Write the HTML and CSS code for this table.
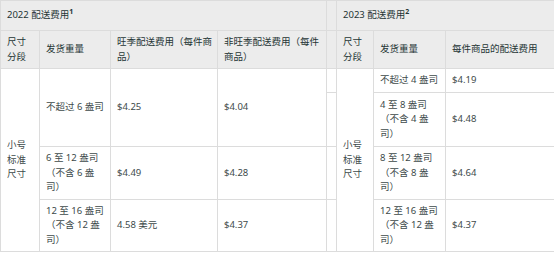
FILE: index.html
```html
<!DOCTYPE html>
<html lang="zh-CN">
<head>
<meta charset="utf-8">
<title>配送费用</title>
<link rel="stylesheet" href="styles.css">
</head>
<body>
<table class="fees">
  <colgroup>
    <col class="w39"><col class="w71"><col class="w107"><col class="w109">
    <col class="w10">
    <col class="w37"><col class="w72"><col class="w109">
  </colgroup>
  <thead>
    <tr class="r1">
      <th colspan="4">2022 配送费用<sup>1</sup></th>
      <th class="gap"></th>
      <th colspan="3">2023 配送费用<sup>2</sup></th>
    </tr>
    <tr class="r2">
      <th>尺寸分段</th>
      <th>发货重量</th>
      <th>旺季配送费用（每件商品）</th>
      <th>非旺季配送费用（每件商品）</th>
      <th class="gap"></th>
      <th>尺寸分段</th>
      <th>发货重量</th>
      <th>每件商品的配送费用</th>
    </tr>
  </thead>
  <tbody>
    <tr class="r3">
      <td rowspan="4">小号标准尺寸</td>
      <td rowspan="2">不超过 6 盎司</td>
      <td rowspan="2">$4.25</td>
      <td rowspan="2">$4.04</td>
      <td class="gap"></td>
      <td rowspan="4">小号标准尺寸</td>
      <td>不超过 4 盎司</td>
      <td>$4.19</td>
    </tr>
    <tr class="r4">
      <td class="gap"></td>
      <td>4 至 8 盎司（不含 4 盎司）</td>
      <td>$4.48</td>
    </tr>
    <tr class="r5">
      <td>6 至 12 盎司（不含 6 盎司）</td>
      <td>$4.49</td>
      <td>$4.28</td>
      <td class="gap"></td>
      <td>8 至 12 盎司（不含 8 盎司）</td>
      <td>$4.64</td>
    </tr>
    <tr class="r6">
      <td>12 至 16 盎司（不含 12 盎司）</td>
      <td>4.58 美元</td>
      <td>$4.37</td>
      <td class="gap"></td>
      <td>12 至 16 盎司（不含 12 盎司）</td>
      <td>$4.37</td>
    </tr>
  </tbody>
</table>
</body>
</html>
```
FILE: styles.css
```css
html, body {
  margin: 0;
  padding: 0;
  background: #ffffff;
}

.fees {
  border-collapse: collapse;
  table-layout: fixed;
  width: 554px;
  font-family: "Noto Sans", "Noto Sans CJK SC", sans-serif;
  font-size: 9.5px;
  line-height: 14.5px;
  color: #3d4a4a;
}

.w39 { width: 39px; }
.w71 { width: 71px; }
.w107 { width: 107px; }
.w109 { width: 109px; }
.w10 { width: 10px; }
.w37 { width: 37px; }
.w72 { width: 72px; }

.fees th,
.fees td {
  border: 1px solid #dcdcdc;
  padding: 0 4px 0 6px;
  text-align: left;
  vertical-align: middle;
  font-weight: normal;
  overflow: hidden;
}

.fees th {
  background: #ececec;
  color: #253535;
}

.fees tr > :last-child {
  border-right: none;
}

.fees .gap {
  padding: 0;
}

.fees sup {
  font-size: 7px;
  line-height: 0;
  vertical-align: 4px;
  font-weight: bold;
}

.r1 { height: 30px; }
.r2 { height: 38px; }
.r3 { height: 24px; }
.r4 { height: 54px; }
.r5 { height: 53px; }
.r6 { height: 52px; }
```
